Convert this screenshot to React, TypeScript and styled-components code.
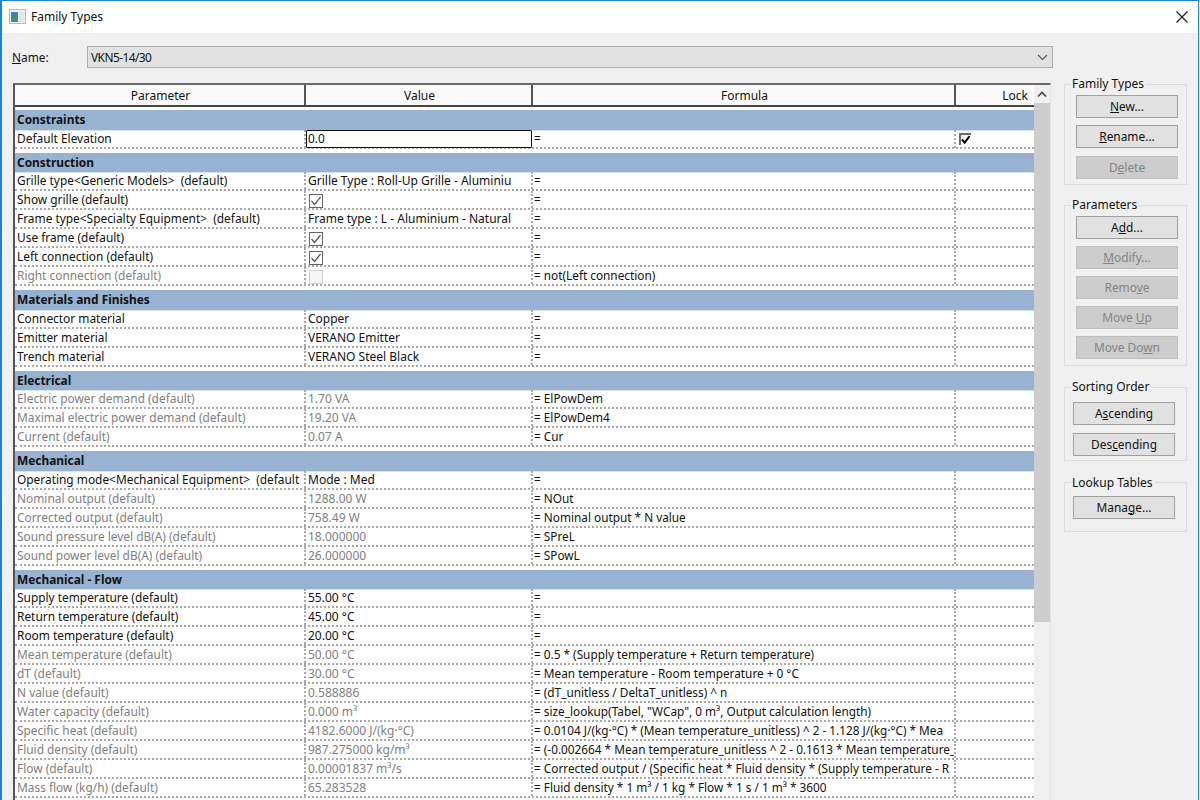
import React from "react";
import styled, { createGlobalStyle } from "styled-components";

const Global = createGlobalStyle`
  html, body { margin: 0; padding: 0; height: 100%; overflow: hidden; background: #fff; }
  #root { height: 100%; }
  * { box-sizing: border-box; }
`;

const Window = styled.div`
  width: 1199px;
  height: 800px;
  display: flex;
  flex-direction: column;
  overflow: hidden;
  background: #f0f0f0;
  border: 1px solid #1b84d6;
  border-bottom: 0;
  border-left-width: 2px;
  font-family: "Noto Sans", "Open Sans", sans-serif;
  font-size: 11.9px;
  color: #111;
`;

const TitleBar = styled.div`
  height: 32px;
  flex: none;
  background: #fff;
  display: flex;
  align-items: center;
  padding: 0 9px 1px 7px;
  gap: 5px;
`;

const TitleText = styled.span`
  flex: 1;
  font-size: 12px;
`;

const Body = styled.div`
  flex: 1;
  min-height: 0;
  display: flex;
`;

const Main = styled.div`
  width: 1052px;
  flex: none;
  padding: 13px 0 0 10px;
  display: flex;
  flex-direction: column;
`;

const NameRow = styled.div`
  display: flex;
  align-items: center;
  height: 22px;
  flex: none;
`;

const NameLabel = styled.label`
  width: 75px;
  flex: none;
`;

const Select = styled.div`
  width: 966px;
  height: 22px;
  flex: none;
  display: flex;
  align-items: center;
  justify-content: space-between;
  padding: 0 4px 0 3px;
  background: #e1e1e1;
  border: 1px solid #adadad;
`;

const SelectValue = styled.span`
  letter-spacing: -0.55px;
`;

const Frame = styled.div`
  flex: 1;
  min-height: 0;
  margin: 15px 0 0 1px;
  width: 1038px;
  display: flex;
  border-top: 2px solid #696969;
  border-left: 2px solid #555;
  border-right: 1px solid #e2e2e2;
`;

const TableArea = styled.div`
  width: 1019px;
  flex: none;
  background: #fff;
  display: flex;
  flex-direction: column;
`;

const HeaderRow = styled.div`
  height: 22px;
  flex: none;
  display: grid;
  grid-template-columns: 291px 227px 423px 1fr;
  background: #fafafa;
  border-bottom: 2px solid #444;
`;

const HeaderCell = styled.div<{ $right?: boolean }>`
  display: flex;
  align-items: center;
  justify-content: ${(p) => (p.$right ? "flex-end" : "center")};
  padding: ${(p) => (p.$right ? "0 6px 0 0" : "0 0 0 2px")};
  border-right: ${(p) => (p.$right ? "0" : "2px solid #555")};
  font-size: 12px;
`;

const Sections = styled.div`
  display: flex;
  flex-direction: column;
  gap: 4px;
  padding-top: 3px;
`;

const Band = styled.div`
  height: 19.5px;
  background: #98b3d1;
  font-weight: 700;
  line-height: 18px;
  padding-left: 2px;
  box-shadow: 0 1px 0 #d5e2f0;
`;

const Row = styled.div<{ $dim?: boolean }>`
  height: 19px;
  display: grid;
  grid-template-columns: 291px 227px 423px 1fr;
  border-bottom: 2px dotted #a8a8a8;
  color: ${(p) => (p.$dim ? "#808080" : "#111")};
`;

const Cell = styled.div`
  overflow: hidden;
  white-space: pre;
  line-height: 17px;
  padding-left: 2px;
  border-right: 2px dotted #a8a8a8;
`;

const ValueCell = styled(Cell)`
  font-size: 12px;
`;

const FormulaCell = styled(Cell)`
  color: #111;
  padding-left: 1px;
  font-size: 11.8px;
`;

const FocusCell = styled.div`
  height: 18px;
  width: 226px;
  line-height: 14px;
  padding-left: 1px;
  border: 1.5px solid #111;
  border-radius: 1px;
  color: #111;
`;

const LockCell = styled.div`
  padding: 3px 0 0 3px;
`;

const BoxWrap = styled.div`
  padding: 3px 0 0 3px;
  border-right: 2px dotted #a8a8a8;
`;

const Box = styled.div<{ $off?: boolean }>`
  width: 14px;
  height: 14px;
  display: flex;
  border: 1px solid ${(p) => (p.$off ? "#d0d0d0" : "#666")};
  background: ${(p) => (p.$off ? "#f6f6f6" : "#fff")};
`;

const LockBox = styled.div`
  width: 12px;
  height: 12px;
  display: flex;
  border-top: 2px solid #6a6a6a;
  border-left: 2px solid #6a6a6a;
  background: #fff;
`;

const ScrollBar = styled.div`
  width: 16px;
  flex: none;
  background: #f0f0f0;
  display: flex;
  flex-direction: column;
`;

const ScrollButton = styled.div`
  height: 18px;
  flex: none;
  display: flex;
  align-items: center;
  justify-content: center;
`;

const ScrollThumb = styled.div`
  height: 519px;
  flex: none;
  background: #cdcdcd;
`;

const Side = styled.div`
  width: 123px;
  flex: none;
  margin: 43px 0 0 10px;
  display: flex;
  flex-direction: column;
`;

const Group = styled.fieldset<{ $after: number }>`
  margin: 0 0 ${(p) => p.$after}px;
  min-width: 0;
  border: 1px solid #dcdcdc;
  padding: 0;
`;

const GroupBody = styled.div<{ $top: number; $bottom: number; $left: number; $gap: number }>`
  padding: ${(p) => p.$top}px 0 ${(p) => p.$bottom}px ${(p) => p.$left}px;
  display: flex;
  flex-direction: column;
  gap: ${(p) => p.$gap}px;
`;

const Legend = styled.legend`
  padding: 0 2px 0 1px;
  margin-left: 6px;
  line-height: 16px;
  font-size: 12px;
`;

const Btn = styled.div<{ $off?: boolean }>`
  width: 102px;
  height: 23px;
  flex: none;
  display: flex;
  align-items: center;
  justify-content: center;
  padding-bottom: 1px;
  background: ${(p) => (p.$off ? "#cccccc" : "#e1e1e1")};
  border: 1px solid ${(p) => (p.$off ? "#bfbfbf" : "#a0a0a0")};
  color: ${(p) => (p.$off ? "#838383" : "#111")};
  white-space: pre;
`;

const Check = () => (
  <svg width="12" height="12" viewBox="0 0 12 12">
    <path d="M1.5 6 L4.6 9.4 L10.6 1.8" fill="none" stroke="#555" strokeWidth="1.3" />
  </svg>
);

const LockCheck = () => (
  <svg width="10" height="10" viewBox="0 0 10 10">
    <path d="M1 4.5 L3.6 7.6 L8.6 1.2" fill="none" stroke="#000" strokeWidth="2" />
  </svg>
);

type RowData = { p: string; v?: string; f?: string; dim?: boolean; check?: "on" | "off"; focus?: boolean; lock?: boolean };
type SectionData = { title: string; rows: RowData[] };

const data: SectionData[] = [
  { title: "Constraints", rows: [{ p: "Default Elevation", v: "0.0", f: "=", focus: true, lock: true }] },
  {
    title: "Construction",
    rows: [
      { p: "Grille type<Generic Models>  (default)", v: "Grille Type : Roll-Up Grille - Aluminiu", f: "=" },
      { p: "Show grille (default)", check: "on", f: "=" },
      { p: "Frame type<Specialty Equipment>  (default)", v: "Frame type : L - Aluminium - Natural", f: "=" },
      { p: "Use frame (default)", check: "on", f: "=" },
      { p: "Left connection (default)", check: "on", f: "=" },
      { p: "Right connection (default)", check: "off", f: "= not(Left connection)", dim: true },
    ],
  },
  {
    title: "Materials and Finishes",
    rows: [
      { p: "Connector material", v: "Copper", f: "=" },
      { p: "Emitter material", v: "VERANO Emitter", f: "=" },
      { p: "Trench material", v: "VERANO Steel Black", f: "=" },
    ],
  },
  {
    title: "Electrical",
    rows: [
      { p: "Electric power demand (default)", v: "1.70 VA", f: "= ElPowDem", dim: true },
      { p: "Maximal electric power demand (default)", v: "19.20 VA", f: "= ElPowDem4", dim: true },
      { p: "Current (default)", v: "0.07 A", f: "= Cur", dim: true },
    ],
  },
  {
    title: "Mechanical",
    rows: [
      { p: "Operating mode<Mechanical Equipment>  (default", v: "Mode : Med", f: "=" },
      { p: "Nominal output (default)", v: "1288.00 W", f: "= NOut", dim: true },
      { p: "Corrected output (default)", v: "758.49 W", f: "= Nominal output * N value", dim: true },
      { p: "Sound pressure level dB(A) (default)", v: "18.000000", f: "= SPreL", dim: true },
      { p: "Sound power level dB(A) (default)", v: "26.000000", f: "= SPowL", dim: true },
    ],
  },
  {
    title: "Mechanical - Flow",
    rows: [
      { p: "Supply temperature (default)", v: "55.00 °C", f: "=" },
      { p: "Return temperature (default)", v: "45.00 °C", f: "=" },
      { p: "Room temperature (default)", v: "20.00 °C", f: "=" },
      { p: "Mean temperature (default)", v: "50.00 °C", f: "= 0.5 * (Supply temperature + Return temperature)", dim: true },
      { p: "dT (default)", v: "30.00 °C", f: "= Mean temperature - Room temperature + 0 °C", dim: true },
      { p: "N value (default)", v: "0.588886", f: "= (dT_unitless / DeltaT_unitless) ^ n", dim: true },
      { p: "Water capacity (default)", v: "0.000 m³", f: '= size_lookup(Tabel, "WCap", 0 m³, Output calculation length)', dim: true },
      { p: "Specific heat (default)", v: "4182.6000 J/(kg·°C)", f: "= 0.0104 J/(kg·°C) * (Mean temperature_unitless) ^ 2 - 1.128 J/(kg·°C) * Mea", dim: true },
      { p: "Fluid density (default)", v: "987.275000 kg/m³", f: "= (-0.002664 * Mean temperature_unitless ^ 2 - 0.1613 * Mean temperature_", dim: true },
      { p: "Flow (default)", v: "0.00001837 m³/s", f: "= Corrected output / (Specific heat * Fluid density * (Supply temperature - R", dim: true },
      { p: "Mass flow (kg/h) (default)", v: "65.283528", f: "= Fluid density * 1 m³ / 1 kg * Flow * 1 s / 1 m³ * 3600", dim: true },
    ],
  },
];

const ParamRow = ({ r }: { r: RowData }) => (
  <Row $dim={r.dim}>
    <Cell>{r.p}</Cell>
    {r.focus ? (
      <FocusCell>{r.v}</FocusCell>
    ) : r.check ? (
      <BoxWrap>
        <Box $off={r.check === "off"}>{r.check === "on" && <Check />}</Box>
      </BoxWrap>
    ) : (
      <ValueCell>{r.v}</ValueCell>
    )}
    <FormulaCell>{r.f}</FormulaCell>
    {r.lock ? (
      <LockCell>
        <LockBox>
          <LockCheck />
        </LockBox>
      </LockCell>
    ) : (
      <div />
    )}
  </Row>
);

export default function App() {
  return (
    <Window>
      <Global />
      <TitleBar>
        <svg width="17" height="15" viewBox="0 0 17 15">
          <rect x="0.5" y="0.5" width="16" height="14" fill="#f2f2f2" stroke="#b9b9b9" />
          <rect x="2" y="3" width="7" height="10" fill="#3f8f8f" />
          <rect x="2" y="3" width="7" height="4" fill="#4a7fb5" />
          <rect x="10" y="3" width="5" height="10" fill="#e4e4e4" />
        </svg>
        <TitleText>Family Types</TitleText>
        <svg width="14" height="14" viewBox="0 0 14 14">
          <path d="M1.5 1.5 L12.5 12.5 M12.5 1.5 L1.5 12.5" stroke="#222" strokeWidth="1.2" fill="none" />
        </svg>
      </TitleBar>
      <Body>
        <Main>
          <NameRow>
            <NameLabel>
              <u>N</u>ame:
            </NameLabel>
            <Select>
              <SelectValue>VKN5-14/30</SelectValue>
              <svg width="11" height="7" viewBox="0 0 11 7">
                <path d="M1 1 L5.5 5.5 L10 1" fill="none" stroke="#555" strokeWidth="1.2" />
              </svg>
            </Select>
          </NameRow>
          <Frame>
            <TableArea>
              <HeaderRow>
                <HeaderCell>Parameter</HeaderCell>
                <HeaderCell>Value</HeaderCell>
                <HeaderCell>Formula</HeaderCell>
                <HeaderCell $right>Lock</HeaderCell>
              </HeaderRow>
              <Sections>
                {data.map((s) => (
                  <div key={s.title}>
                    <Band>{s.title}</Band>
                    {s.rows.map((r) => (
                      <ParamRow key={r.p} r={r} />
                    ))}
                  </div>
                ))}
              </Sections>
            </TableArea>
            <ScrollBar>
              <ScrollButton>
                <svg width="10" height="7" viewBox="0 0 10 7">
                  <path d="M1 5.5 L5 1.5 L9 5.5" fill="none" stroke="#444" strokeWidth="1.6" />
                </svg>
              </ScrollButton>
              <ScrollThumb />
            </ScrollBar>
          </Frame>
        </Main>
        <Side>
          <Group $after={12}>
            <Legend>Family Types</Legend>
            <GroupBody $top={2.5} $bottom={5.5} $left={11} $gap={7.5}>
              <Btn><span><u>N</u>ew...</span></Btn>
              <Btn><span><u>R</u>ename...</span></Btn>
              <Btn $off><span>D<u>e</u>lete</span></Btn>
            </GroupBody>
          </Group>
          <Group $after={13}>
            <Legend>Parameters</Legend>
            <GroupBody $top={3} $bottom={6} $left={11} $gap={7}>
              <Btn><span>A<u>d</u>d...</span></Btn>
              <Btn $off><span><u>M</u>odify...</span></Btn>
              <Btn $off><span>Remo<u>v</u>e</span></Btn>
              <Btn $off><span>Move <u>U</u>p</span></Btn>
              <Btn $off><span>Move Do<u>w</u>n</span></Btn>
            </GroupBody>
          </Group>
          <Group $after={14}>
            <Legend>Sorting Order</Legend>
            <GroupBody $top={7} $bottom={4} $left={8} $gap={7.5}>
              <Btn><span>A<u>s</u>cending</span></Btn>
              <Btn><span>Des<u>c</u>ending</span></Btn>
            </GroupBody>
          </Group>
          <Group $after={0}>
            <Legend>Lookup Tables</Legend>
            <GroupBody $top={5} $bottom={12} $left={8} $gap={7.5}>
              <Btn><span>Mana<u>g</u>e...</span></Btn>
            </GroupBody>
          </Group>
        </Side>
      </Body>
    </Window>
  );
}
